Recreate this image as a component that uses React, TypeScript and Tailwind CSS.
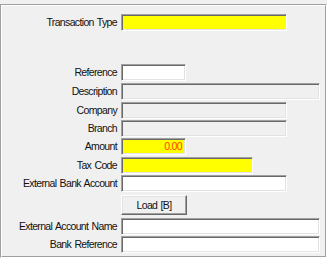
import React from 'react'

type Row = {
  label: string
  width: number
  top: number
  kind: 'yellow' | 'white' | 'disabled'
  value?: string
}

const rows: Row[] = [
  { label: 'Transaction Type', width: 166, top: 8, kind: 'yellow' },
  { label: 'Reference', width: 65, top: 33, kind: 'white' },
  { label: 'Description', width: 199, top: 2, kind: 'disabled' },
  { label: 'Company', width: 166, top: 2, kind: 'disabled' },
  { label: 'Branch', width: 166, top: 1, kind: 'disabled' },
  { label: 'Amount', width: 65, top: 1, kind: 'yellow', value: '0.00' },
  { label: 'Tax Code', width: 132, top: 2, kind: 'yellow' },
  { label: 'External Bank Account', width: 166, top: 1, kind: 'white' },
]

const rowsAfter: Row[] = [
  { label: 'External Account Name', width: 199, top: 3, kind: 'white' },
  { label: 'Bank Reference', width: 199, top: 1, kind: 'white' },
]

const bgFor = {
  yellow: 'bg-[#ffff00]',
  white: 'bg-white',
  disabled: 'bg-[#f0f0f0]',
}

function Field({ row }: { row: Row }) {
  return (
    <div className="flex items-center h-[17px]" style={{ marginTop: row.top }}>
      <div className="w-[116px] text-right pr-[1px] text-[#111] whitespace-nowrap">{row.label}</div>
      <div
        className={`ml-[3px] h-[17px] border border-t-[#a0a0a0] border-l-[#a0a0a0] border-r-white border-b-white shadow-[inset_1px_1px_0_#696969,inset_-1px_-1px_0_#e3e3e3] flex items-center justify-end pr-[3px] text-[#ff3c00] ${bgFor[row.kind]}`}
        style={{ width: row.width }}
      >
        {row.value}
      </div>
    </div>
  )
}

export default function App() {
  return (
    <div
      className="w-[327px] h-[258px] bg-[#f0f0f0] pt-[4px] text-[10.5px] tracking-[-0.65px] [word-spacing:1px] leading-none"
      style={{ fontFamily: '"Liberation Sans", Arial, sans-serif' }}
    >
      <div className="h-[254px] border border-t-[#a0a0a0] border-l-[#a0a0a0] border-r-white border-b-white">
        <div className="h-full border border-t-white border-l-white border-r-[#a0a0a0] border-b-[#a0a0a0]">
          {rows.map(r => (
            <Field key={r.label} row={r} />
          ))}
          <div className="flex mt-[3px]">
            <div className="w-[119px]" />
            <button className="w-[66px] h-[20px] bg-[#f0f0f0] border border-t-white border-l-white border-r-[#696969] border-b-[#696969] shadow-[inset_-1px_-1px_0_#a0a0a0,inset_1px_1px_0_#e3e3e3] text-[#111] text-[10.5px] tracking-[-0.65px] [word-spacing:1px] leading-none">
              Load [B]
            </button>
          </div>
          {rowsAfter.map(r => (
            <Field key={r.label} row={r} />
          ))}
        </div>
      </div>
    </div>
  )
}
